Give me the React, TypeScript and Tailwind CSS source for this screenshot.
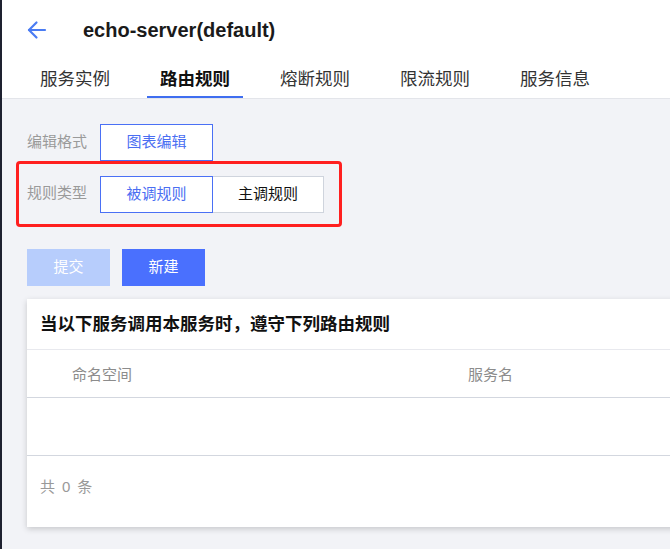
import React from "react";

const cjk = { fontFamily: '"Liberation Sans", Arial, "Noto Sans CJK SC", sans-serif' };

export default function App() {
  const tabs = ["服务实例", "路由规则", "熔断规则", "限流规则", "服务信息"];
  return (
    <div className="w-[670px] h-[549px] overflow-hidden flex bg-[#f2f3f7]" style={cjk}>
      <div className="w-[2px] shrink-0 bg-[#1e2130]" />
      <div className="flex-1 flex flex-col min-w-0">
        {/* header */}
        <div className="bg-white border-b border-[#e3e5ea] h-[99px] flex flex-col">
          <div className="flex items-center h-[60px] pl-[24px]">
            <svg width="22" height="22" viewBox="0 0 22 22" fill="none" stroke="#4a7cf3" strokeWidth="2.2" strokeLinecap="round" strokeLinejoin="round">
              <path d="M19 11H3" />
              <path d="M10.5 3.5L3 11l7.5 7.5" />
            </svg>
            <div className="ml-[35px] text-[20px] font-bold text-[#1a1a1a] leading-none">echo-server(default)</div>
          </div>
          <div className="flex gap-[24px] pl-[25px] mt-auto">
            {tabs.map((t, i) => (
              <div
                key={t}
                className={
                  i === 1
                    ? "px-[13px] h-[38px] flex items-start text-[17.5px] leading-none font-bold text-[#111] border-b-2 border-[#3f6ef0]"
                    : "px-[13px] h-[38px] flex items-start text-[17.5px] leading-none text-[#333]"
                }
              >
                <span className="pt-[11px]">{t}</span>
              </div>
            ))}
          </div>
        </div>

        {/* content */}
        <div className="pl-[25px] flex flex-col">
          <div className="flex items-center mt-[25px] h-[37px]">
            <div className="w-[73px] text-[15px] text-[#9a9a9a]">编辑格式</div>
            <div className="w-[113px] h-[37px] flex items-center justify-center border border-[#4a70f5] bg-white text-[15px] text-[#4a6ef2]">
              图表编辑
            </div>
          </div>

          <div className="-ml-[11px] w-[326px] h-[66px] border-[3px] border-[#ff1f1f] rounded-[4px] flex items-center pl-[8px]">
            <div className="w-[73px] text-[15px] text-[#9a9a9a] pb-[2px]">规则类型</div>
            <div className="flex">
              <div className="w-[113px] h-[37px] flex items-center justify-center border border-[#4a70f5] bg-white text-[15px] text-[#4a6ef2]">
                被调规则
              </div>
              <div className="w-[111px] h-[37px] flex items-center justify-center border border-l-0 border-[#cfd4dd] bg-white text-[15px] text-[#111]">
                主调规则
              </div>
            </div>
          </div>

          <div className="flex gap-[12px] mt-[22px]">
            <div className="w-[83px] h-[37px] flex items-center justify-center bg-[#b7cdfc] text-white text-[15px]">提交</div>
            <div className="w-[83px] h-[37px] flex items-center justify-center bg-[#4a70fe] text-white text-[15px]">新建</div>
          </div>

          <div className="mt-[13px] w-[800px] h-[228px] bg-white shadow-[0_2px_6px_rgba(0,0,0,0.18)] flex flex-col">
            <div className="h-[51px] flex items-center pl-[13px] border-b border-[#e8e9ee] text-[17.5px] font-bold text-[#111]">
              当以下服务调用本服务时，遵守下列路由规则
            </div>
            <div className="h-[48px] flex items-center pt-[3px] border-b border-[#d3d7df] text-[15px] text-[#8c8c8c]">
              <div className="pl-[45px] w-[441px]">命名空间</div>
              <div>服务名</div>
            </div>
            <div className="h-[58px] border-b border-[#d3d7df]" />
            <div className="pl-[13px] pt-[21px] text-[15px] text-[#999] leading-[20px] flex gap-[7px]">
              <span>共</span>
              <span>0</span>
              <span>条</span>
            </div>
          </div>
        </div>
      </div>
    </div>
  );
}
